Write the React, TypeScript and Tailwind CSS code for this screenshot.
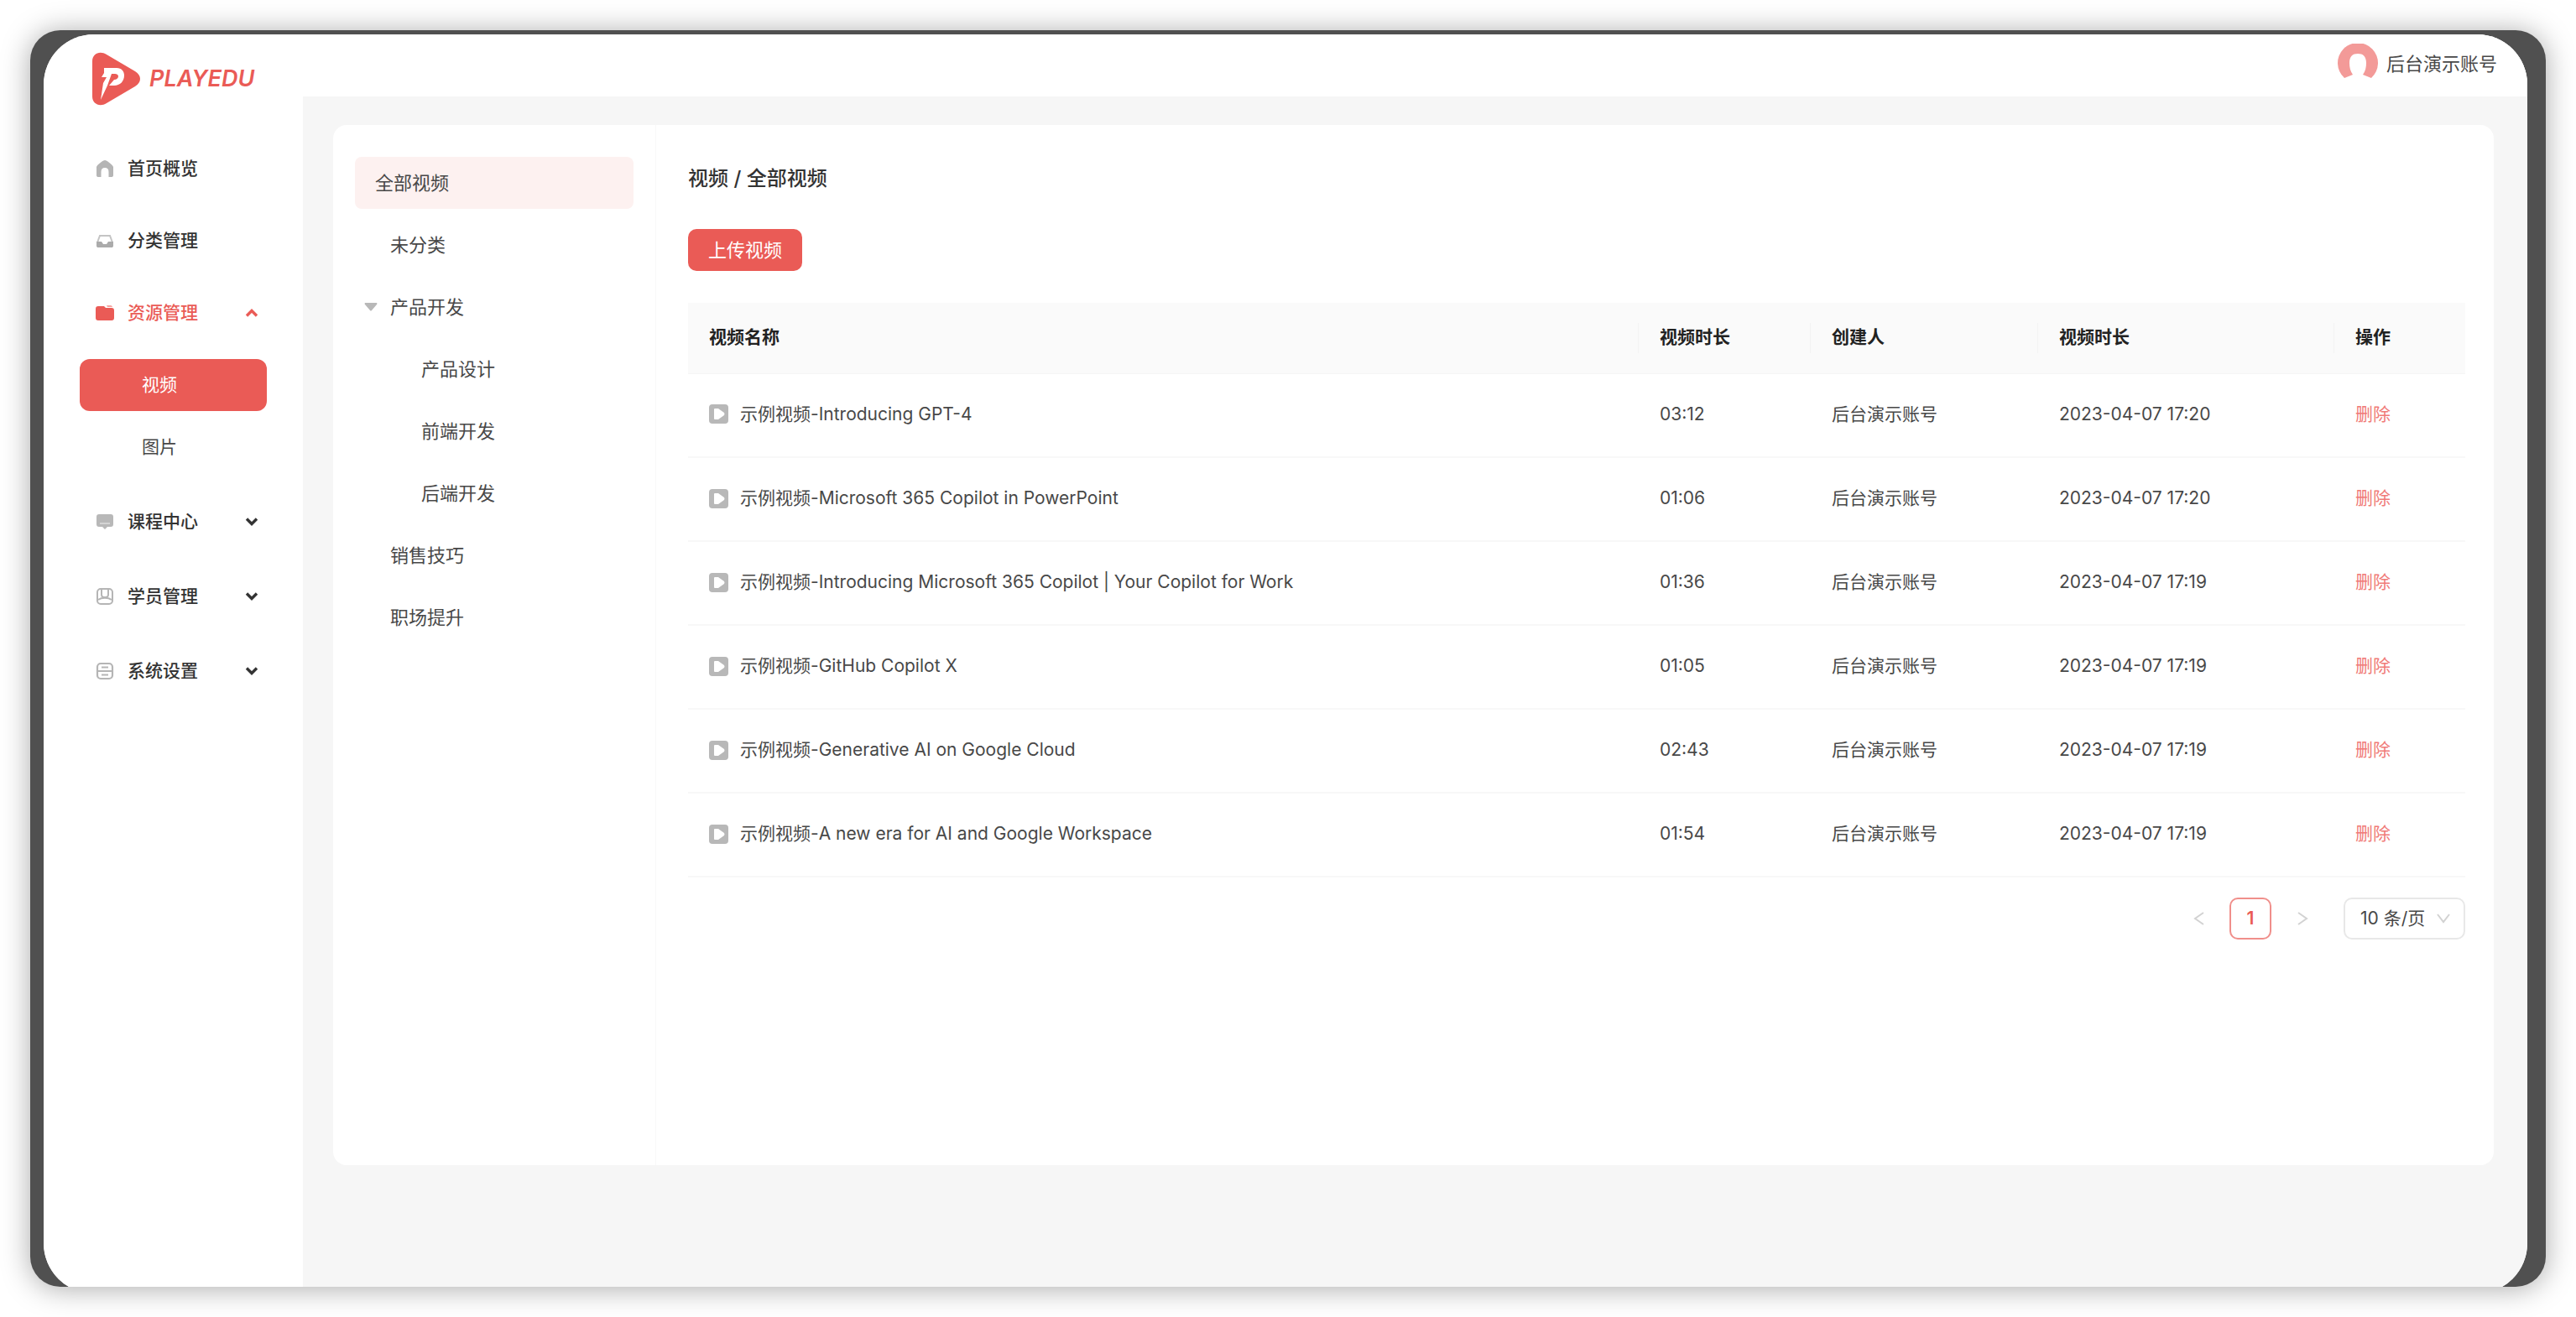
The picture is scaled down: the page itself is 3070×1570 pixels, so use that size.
import type { ReactNode } from "react";

const videos = [
  { name: "示例视频-Introducing GPT-4", length: "03:12", time: "2023-04-07 17:20" },
  { name: "示例视频-Microsoft 365 Copilot in PowerPoint", length: "01:06", time: "2023-04-07 17:20" },
  { name: "示例视频-Introducing Microsoft 365 Copilot | Your Copilot for Work", length: "01:36", time: "2023-04-07 17:19" },
  { name: "示例视频-GitHub Copilot X", length: "01:05", time: "2023-04-07 17:19" },
  { name: "示例视频-Generative AI on Google Cloud", length: "02:43", time: "2023-04-07 17:19" },
  { name: "示例视频-A new era for AI and Google Workspace", length: "01:54", time: "2023-04-07 17:19" },
];

const categories = [
  { label: "未分类", indent: "pl-[42px]" },
  { label: "产品开发", indent: "pl-[11px]", open: true },
  { label: "产品设计", indent: "pl-[79px]" },
  { label: "前端开发", indent: "pl-[79px]" },
  { label: "后端开发", indent: "pl-[79px]" },
  { label: "销售技巧", indent: "pl-[42px]" },
  { label: "职场提升", indent: "pl-[42px]" },
];

function Logo() {
  return (
    <a href="#" aria-label="PLAYEDU" className="ml-[58px] mt-[21px] flex items-center gap-2.5 text-[#ea5b56]">
      <svg width="58" height="64" viewBox="0 0 58 64" aria-hidden="true">
        <path
          d="M0 11C0 2 9-2 17 3L51 23C59 28 59 36 51 41L17 61C9 66 0 62 0 53Z"
          fill="currentColor"
        />
        <path
          d="M14 19H29C35 19 38 23 38 28C38 35 33 40 26 40H20L26 33C29 33 31 31 31 29C31 27 29 26 27 26H23L18 40L10 57L13 37L17 30H11L14 25Z"
          fill="#fff"
        />
      </svg>
      <span className="text-[27px] font-semibold italic leading-8">PLAYEDU</span>
    </a>
  );
}

function Chevron({ up = false }: { up?: boolean }) {
  return (
    <svg className="ml-auto" width="16" height="12" viewBox="0 0 16 12" fill="none" stroke="currentColor" strokeWidth="3.4" aria-hidden="true">
      <path d={up ? "M2 9.5L8 3.5L14 9.5" : "M2 2.5L8 8.5L14 2.5"} />
    </svg>
  );
}

const homeIcon = (
  <path
    fill="#b5b5b5"
    d="M11 1C13 1 20 6 21 9V19C21 20.500 20 21 18.500 21H15.500V15C15.500 11.500 14 10 11 10S6.500 11.500 6.500 15V21H3.500C2 21 1 20.500 1 19V9C2 6 9 1 11 1Z"
  />
);
const trayIcon = (
  <>
    <path fill="none" stroke="#c4c4c4" strokeWidth="2" d="M2 13L5 5H17L20 13" />
    <path fill="#ababab" d="M1 12H7L9 15H13L15 12H21V17C21 18.500 20 19 19 19H3C2 19 1 18.500 1 17Z" />
  </>
);
const folderIcon = (
  <>
    <path fill="#ea5b56" d="M3 3H10L12 5H19C21 5 22 6 22 8V17C22 19 21 20 19 20H3C1 20 0 19 0 17V6C0 4 1 3 3 3Z" />
    <path fill="#f6a5a1" d="M13 2H18C19 2 20 3 20 4H14Z" />
  </>
);
const boardIcon = (
  <>
    <path fill="#b8b8b8" d="M4 2H18C20 2 21 3 21 5V14C21 16 20 17 18 17H14L11 20L8 17H4C2 17 1 16 1 14V5C1 3 2 2 4 2Z" />
    <path stroke="#dedede" strokeWidth="1.5" fill="none" d="M5 13H17" />
  </>
);
const badgeIcon = (
  <g fill="none" stroke="#b5b5b5" strokeWidth="2">
    <rect x="2" y="2" width="18" height="18" rx="4" />
    <path d="M7 3V9C7 11 9 12 11 12S15 11 15 9V3M3 15C7 12 15 12 19 15" />
  </g>
);
const settingsIcon = (
  <g fill="none" stroke="#b5b5b5" strokeWidth="2.2">
    <rect x="2" y="2" width="18" height="18" rx="4" />
    <path d="M2 11H20M7 6.500H15M7 15.500H15" />
  </g>
);

function MenuItem({
  icon,
  label,
  arrow,
  active = false,
}: {
  icon: ReactNode;
  label: string;
  arrow?: "up" | "down";
  active?: boolean;
}) {
  return (
    <button
      type="button"
      aria-expanded={arrow ? arrow === "up" : undefined}
      className={`flex h-[62px] w-full items-center gap-4 pl-[19px] pr-2.5 font-medium ${active ? "text-[#ea5b56]" : "text-[#333]"}`}
    >
      <svg width="22" height="22" viewBox="0 0 22 22" aria-hidden="true">
        {icon}
      </svg>
      {label}
      {arrow && <Chevron up={arrow === "up"} />}
    </button>
  );
}

function Sidebar() {
  return (
    <aside className="w-[309px] shrink-0 bg-white text-[21px]">
      <Logo />
      <nav className="mt-11 flex flex-col gap-[27px] px-[43px]">
        <div className="flex flex-col gap-6">
          <MenuItem icon={homeIcon} label="首页概览" />
          <MenuItem icon={trayIcon} label="分类管理" />
          <MenuItem icon={folderIcon} label="资源管理" arrow="up" active />
          <div className="flex flex-col gap-3">
            <button type="button" className="h-[62px] rounded-xl bg-[#ea5b56] pl-[74px] text-left text-white">
              视频
            </button>
            <button type="button" className="h-[62px] rounded-xl pl-[74px] text-left">
              图片
            </button>
          </div>
        </div>
        <MenuItem icon={boardIcon} label="课程中心" arrow="down" />
        <MenuItem icon={badgeIcon} label="学员管理" arrow="down" />
        <MenuItem icon={settingsIcon} label="系统设置" arrow="down" />
      </nav>
    </aside>
  );
}

function Header() {
  return (
    <header className="flex h-[74px] shrink-0 items-center justify-end bg-white pb-1 pr-9">
      <button type="button" className="flex items-center gap-2.5">
        <svg width="48" height="48" viewBox="0 0 48 48" aria-hidden="true">
          <path
            fill="#f39a98"
            d="M8 41A24 24 0 1 1 40 41L30 37C33 33 34 28 34 23C34 15 30 12 24 12S14 15 14 23C14 28 15 33 18 37Z"
          />
        </svg>
        后台演示账号
      </button>
    </header>
  );
}

function CategoryTree() {
  return (
    <div className="flex w-[385px] shrink-0 flex-col gap-3 border-r border-[#f8f8f8] px-[26px] pt-[38px]">
      <button type="button" className="h-[62px] rounded-lg bg-[#fdf1f0] pl-6 text-left">
        全部视频
      </button>
      {categories.map((c) => (
        <button key={c.label} type="button" className={`flex h-[62px] items-center gap-[15px] text-left ${c.indent}`}>
          {c.open && (
            <svg width="16" height="10" viewBox="0 0 16 10" aria-hidden="true">
              <path d="M1 0H15Q16 1 15 2L9 9Q8 10 7 9L1 2Q0 1 1 0Z" fill="#b8b8b8" />
            </svg>
          )}
          {c.label}
        </button>
      ))}
    </div>
  );
}

function HeadCell({ children, divider = true }: { children: string; divider?: boolean }) {
  return (
    <th scope="col" className="relative px-[25px] pb-0.5 text-left font-semibold text-[#222]">
      {children}
      {divider && <span className="absolute right-0 top-1/2 h-9 w-px -translate-y-1/2 bg-[#f3f3f3]" />}
    </th>
  );
}

function VideoTable() {
  return (
    <table className="mt-[38px] w-full table-fixed border-collapse text-[21px]">
      <colgroup>
        <col />
        <col className="w-[205px]" />
        <col className="w-[271px]" />
        <col className="w-[353px]" />
        <col className="w-[156px]" />
      </colgroup>
      <thead>
        <tr className="h-[84px] border-b border-[#f5f5f5] bg-[#fafafa]">
          <HeadCell>视频名称</HeadCell>
          <HeadCell>视频时长</HeadCell>
          <HeadCell>创建人</HeadCell>
          <HeadCell>视频时长</HeadCell>
          <HeadCell divider={false}>操作</HeadCell>
        </tr>
      </thead>
      <tbody>
        {videos.map((v) => (
          <tr key={v.name} className="h-[100px] border-b-2 border-[#f8f8f8]">
            <td className="px-[25px] pb-0.5">
              <div className="flex items-center gap-3.5">
                <svg width="23" height="23" viewBox="0 0 23 23" aria-hidden="true">
                  <rect width="23" height="23" rx="4" fill="#b8b8b8" />
                  <path d="M7 5H11L18 10Q19 11.500 18 13L11 18H7Q6 18 6 17V6Q6 5 7 5Z" fill="#fff" />
                </svg>
                {v.name}
              </div>
            </td>
            <td className="px-[25px] pb-0.5">{v.length}</td>
            <td className="px-[25px] pb-0.5">后台演示账号</td>
            <td className="px-[25px] pb-0.5">{v.time}</td>
            <td className="px-[25px] pb-0.5">
              <button type="button" className="text-[#f07a77]">
                删除
              </button>
            </td>
          </tr>
        ))}
      </tbody>
    </table>
  );
}

function Pagination() {
  return (
    <div className="mt-6 flex items-center justify-end text-[21px]">
      <button type="button" aria-label="上一页" className="flex size-[50px] items-center justify-center">
        <svg width="13" height="16" viewBox="0 0 13 16" fill="none" stroke="#d2d2d2" strokeWidth="2" aria-hidden="true">
          <path d="M12 1L2 8L12 15" />
        </svg>
      </button>
      <button
        type="button"
        aria-current="page"
        className="mx-3 size-[50px] rounded-[10px] border-2 border-[#f08f8b] font-semibold text-[#ea5b56]"
      >
        1
      </button>
      <button type="button" aria-label="下一页" className="flex size-[50px] items-center justify-center">
        <svg width="13" height="16" viewBox="0 0 13 16" fill="none" stroke="#d2d2d2" strokeWidth="2" aria-hidden="true">
          <path d="M1 1L11 8L1 15" />
        </svg>
      </button>
      <div className="relative ml-6">
        <select
          aria-label="每页条数"
          className="h-[50px] w-[145px] appearance-none rounded-[10px] border-2 border-[#e8e8e8] bg-white pl-[18px]"
        >
          <option>10 条/页</option>
        </select>
        <svg
          className="pointer-events-none absolute right-[18px] top-[19px]"
          width="16"
          height="12"
          viewBox="0 0 16 12"
          fill="none"
          stroke="#d2d2d2"
          strokeWidth="2"
          aria-hidden="true"
        >
          <path d="M1 1L8 10L15 1" />
        </svg>
      </div>
    </div>
  );
}

export default function App() {
  return (
    <div className="h-screen bg-white p-9 font-[Inter,'Noto_Sans_CJK_SC',sans-serif] text-[22px] leading-8 text-[#484848]">
      <div className="h-full overflow-hidden rounded-[36px] bg-[#505050] pl-4 pr-[22px] pt-[5px] shadow-[0_2px_34px_rgba(0,0,0,0.34)]">
        <div className="-mb-2 flex h-[calc(100%+8px)] overflow-hidden rounded-[60px] bg-white">
          <Sidebar />
          <div className="flex min-w-0 flex-1 flex-col bg-[#f6f6f6]">
            <Header />
            <main className="mb-[153px] ml-9 mr-10 mt-[34px] flex flex-1 rounded-[16px] bg-white">
              <CategoryTree />
              <section className="min-w-0 flex-1 pl-[38px] pr-[34px] pt-12">
                <h1 className="text-[24px] font-medium leading-8 text-[#333]">视频 / 全部视频</h1>
                <button type="button" className="mt-11 h-[50px] rounded-[10px] bg-[#ea5b56] px-6 text-white">
                  上传视频
                </button>
                <VideoTable />
                <Pagination />
              </section>
            </main>
          </div>
        </div>
      </div>
    </div>
  );
}
